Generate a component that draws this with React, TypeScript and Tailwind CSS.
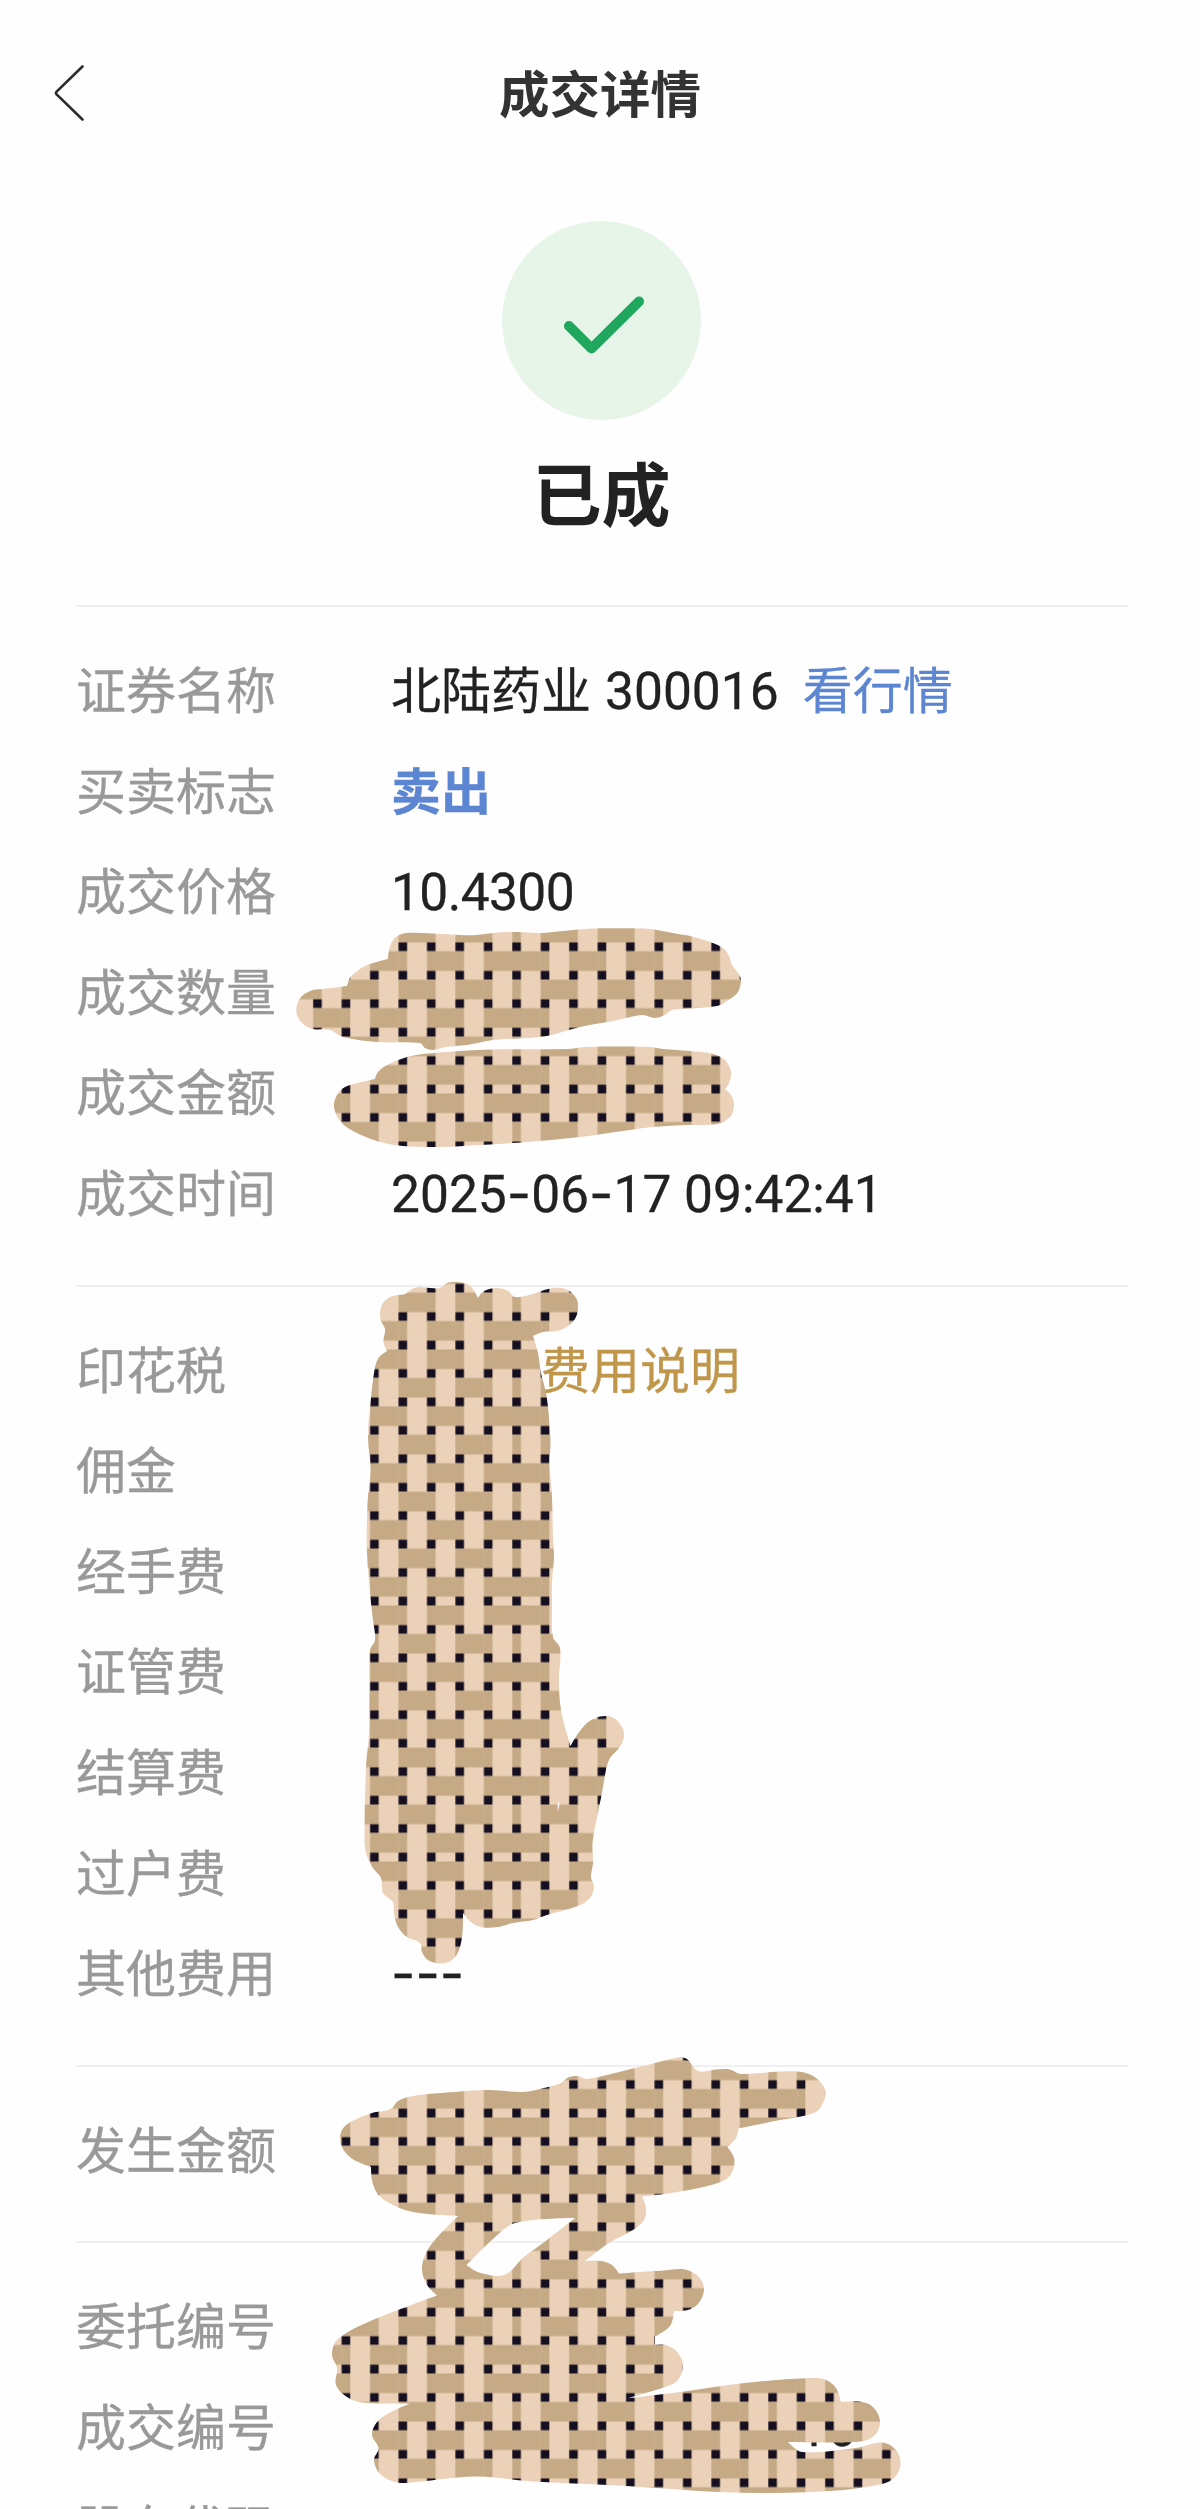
import type { ReactNode } from "react";

type Point = [number, number];

interface DetailRow {
  label: string;
  value?: ReactNode;
}

const Digits = ({ children }: { children: ReactNode }) => (
  <span className="font-['Roboto','Noto_Sans_CJK_SC',sans-serif] text-[51.5px]">
    {children}
  </span>
);

const Dash = ({ children = "-" }: { children?: ReactNode }) => (
  <span className="font-['Inter',sans-serif] text-[53px]">{children}</span>
);

const sections: DetailRow[][] = [
  [
    {
      label: "证券名称",
      value: (
        <>
          <span>北陆药业</span>
          <span className="ml-[14px]">
            <Digits>300016</Digits>
          </span>
          <a className="ml-[24px] text-[#5c86d1]">看行情</a>
        </>
      ),
    },
    {
      label: "买卖标志",
      value: <span className="font-bold text-[#5c86d1]">卖出</span>,
    },
    {
      label: "成交价格",
      value: (
        <span className="tracking-[-0.6px]">
          <Digits>10.4300</Digits>
        </span>
      ),
    },
    { label: "成交数量" },
    { label: "成交金额" },
    {
      label: "成交时间",
      value: (
        <Digits>
          2025
          <Dash />
          06
          <Dash />
          17 09:42:41
        </Digits>
      ),
    },
  ],
  [
    {
      label: "印花税",
      value: <a className="ml-[149px] text-[#c0964b]">费用说明</a>,
    },
    { label: "佣金" },
    { label: "经手费" },
    { label: "证管费" },
    { label: "结算费" },
    { label: "过户费" },
    { label: "其他费用", value: <Dash>---</Dash> },
  ],
  [{ label: "发生金额" }],
  [
    { label: "委托编号" },
    {
      label: "成交编号",
      value: (
        <span className="ml-[407px]">
          <Digits>16</Digits>
        </span>
      ),
    },
    { label: "股东代码" },
  ],
];

// Brush outlines that hide the private values
const quantityMask: Point[] = [
  [388, 959], [389, 950], [393, 940], [399, 935], [407, 933], [433, 933.5], [460, 935], [477, 935],
  [493, 933], [517, 932], [540, 933], [563, 931], [593, 928.5], [643, 928.5], [657, 930], [678, 934],
  [690, 936], [713, 943], [724, 949], [729, 956], [732, 965], [738, 973], [741, 980], [738, 992],
  [730, 999], [717, 1006], [680, 1009], [672, 1010], [665, 1015], [655, 1018], [642, 1015], [613, 1021],
  [580, 1027], [547, 1036], [527, 1038], [493, 1040], [467, 1045], [445, 1047], [433, 1050], [425, 1048],
  [420, 1043], [377, 1042], [343, 1037], [330, 1030], [313, 1029], [303, 1024], [297, 1015], [297, 1005],
  [302, 996], [313, 990], [323, 989], [347, 986], [350, 978], [356, 972], [367, 965],
];

const amountMask: Point[] = [
  [375, 1079], [378, 1072], [387, 1065], [407, 1057], [423, 1054], [460, 1051], [493, 1049.5], [567, 1049],
  [587, 1047], [650, 1047], [663, 1049], [690, 1051], [713, 1054], [725, 1060], [731, 1072], [729, 1083],
  [725, 1089], [731, 1095], [734, 1105], [730, 1117], [717, 1124], [687, 1125], [653, 1127], [630, 1130],
  [580, 1137], [527, 1142], [480, 1145], [440, 1147], [403, 1146], [377, 1141], [353, 1131], [340, 1121],
  [334, 1107], [337, 1095], [345, 1087], [360, 1082.5],
];

const feesMask: Point[] = [
  [380, 1313], [383, 1303], [390, 1297], [398, 1295], [405, 1294], [412, 1289], [420, 1287], [430, 1288],
  [440, 1288], [447, 1283], [457, 1282], [467, 1284], [473, 1289], [478, 1298], [484, 1291], [497, 1288],
  [508, 1291], [515, 1297], [533, 1294], [548, 1289], [562, 1288], [572, 1293], [578, 1303], [576, 1317],
  [568, 1326], [557, 1331], [543, 1332], [533, 1336], [538, 1353], [541, 1373], [546, 1393], [549, 1417],
  [550.5, 1443], [549.5, 1463], [552, 1497], [553, 1537], [554, 1557], [552, 1583], [552, 1607], [553, 1637],
  [560, 1648], [559, 1680], [561, 1710], [570.5, 1746], [577, 1735], [587, 1723], [600, 1716.5], [613, 1717.5],
  [622, 1727], [624, 1737], [619, 1748], [610, 1758], [606, 1770], [602, 1793], [597, 1817], [592.5, 1843],
  [593, 1863], [591, 1877], [594, 1887], [590, 1898], [578, 1906], [547, 1915], [533, 1920], [513, 1923],
  [498, 1927], [483, 1927.5], [472, 1923], [463, 1913], [462.5, 1933], [459, 1950], [452, 1960], [440, 1963.5],
  [428, 1960], [422, 1952], [420, 1943], [407, 1937], [398, 1927], [394, 1913], [393, 1902], [383, 1893],
  [381, 1878], [373, 1868], [366, 1853], [364.5, 1833], [366, 1767], [369, 1733], [369.5, 1667], [370, 1650],
  [375, 1640], [373, 1620], [371, 1603], [367, 1553], [367.5, 1503], [370.5, 1470], [368, 1437], [370.5, 1403],
  [374.5, 1370], [378.5, 1358], [387, 1351], [383.5, 1342], [385, 1329], [381, 1321],
];

const feesGap: Point[] = [[558, 1802], [559.5, 1804], [557.5, 1812]];

const numbersMask: Point[] = [
  [391, 2109], [398, 2101], [413, 2096], [447, 2092.5], [489, 2090], [523, 2092], [544, 2088], [561, 2083],
  [568, 2077.5], [577, 2076], [587, 2079], [623, 2071], [651, 2064], [678, 2057.5], [687, 2059], [698, 2071],
  [716, 2069.5], [730, 2069.5], [741, 2074], [781, 2071.5], [802, 2072], [816, 2078], [825, 2090], [823, 2103],
  [814, 2113], [775, 2121], [738.5, 2128.5], [736, 2138], [727.5, 2147], [734, 2158], [733, 2170], [725, 2180],
  [699, 2188], [664, 2194], [642, 2196.5], [646, 2208], [644, 2220], [633, 2230], [609, 2243], [585, 2261],
  [601, 2261], [612, 2265], [619, 2273.5], [664, 2270.5], [685, 2269.5], [699, 2277], [704, 2290], [698, 2304],
  [688, 2310], [674, 2311], [670, 2326], [655, 2336.5], [655, 2345], [666, 2345], [678, 2353], [683, 2367],
  [678, 2380], [668, 2386], [627, 2398.5], [680, 2392], [745, 2383], [810, 2378], [825, 2379.5], [836, 2388],
  [841, 2402], [860, 2401.5], [873, 2407], [880, 2421], [875, 2435], [861, 2441.5], [788, 2442], [802, 2452],
  [856, 2448], [882, 2442.5], [896, 2450], [900.5, 2465], [894, 2478], [882, 2484], [837, 2490.5], [772, 2493],
  [718, 2492], [626, 2486], [534, 2481.5], [475, 2476.5], [416, 2482], [397, 2482.5], [380, 2474], [374, 2460],
  [378.5, 2448], [372, 2435], [377, 2422], [389, 2413], [410, 2403.5], [362, 2402.5], [347, 2397], [336, 2385],
  [337, 2368], [332, 2355], [337, 2340], [366, 2323], [437, 2295.5], [427, 2285], [422, 2270], [425, 2255],
  [434, 2241], [458, 2216], [413, 2212], [389, 2203], [377, 2193], [372, 2180], [371, 2167], [351, 2158],
  [341, 2145], [341, 2132], [349, 2123], [372, 2113],
];

const numbersGap: Point[] = [
  [515, 2223], [575, 2218], [547, 2240], [524, 2257], [504, 2275], [479, 2272.5], [466.5, 2265], [492, 2240],
];

// Rounds gentle bends, keeps sharp notches sharp
const toPath = (points: Point[]) => {
  const count = points.length;
  const at = (i: number) => points[(i + count) % count];
  const tangent = (i: number): Point => {
    const [ax, ay] = at(i - 1);
    const [bx, by] = at(i);
    const [cx, cy] = at(i + 1);
    const dot = (bx - ax) * (cx - bx) + (by - ay) * (cy - by);
    const len = Math.hypot(bx - ax, by - ay) * Math.hypot(cx - bx, cy - by);
    if (dot / len < 0.6) return [0, 0];
    const span = Math.hypot(cx - ax, cy - ay);
    return [(cx - ax) / span, (cy - ay) / span];
  };

  let d = `M${points[0][0]} ${points[0][1]}`;
  for (let i = 0; i < count; i++) {
    const [x1, y1] = at(i);
    const [x2, y2] = at(i + 1);
    const reach = Math.hypot(x2 - x1, y2 - y1) / 3;
    const [tx1, ty1] = tangent(i);
    const [tx2, ty2] = tangent(i + 1);
    d += `C${x1 + tx1 * reach} ${y1 + ty1 * reach} ${x2 - tx2 * reach} ${y2 - ty2 * reach} ${x2} ${y2}`;
  }
  return d + "Z";
};

const cell = 256 / 9;
const steps = [0, 1, 2, 3, 4, 5, 6, 7, 8];

const WeavePattern = () => (
  <pattern id="weave" x="0.3" y="69.5" width="256" height="256" patternUnits="userSpaceOnUse">
    <rect width="256" height="256" fill="#ebd1b8" />
    {steps.map((row) =>
      steps.map((col) => (
        <g key={`${row}-${col}`}>
          <rect
            x={col * cell}
            y={row * cell}
            width={(row + col) % 2 === 0 ? cell + 0.2 : 8.6}
            height="19.6"
            fill="#c5aa85"
          />
          <rect x={col * cell} y={row * cell + 19.6} width="8.6" height="8.8" fill="#150f1f" />
        </g>
      ))
    )}
  </pattern>
);

const MaskLayer = () => (
  <svg
    className="pointer-events-none absolute left-0 top-0"
    width="1200"
    height="2509"
    viewBox="0 0 1200 2509"
  >
    <defs>
      <WeavePattern />
    </defs>
    <g fill="url(#weave)" fillRule="evenodd">
      <path d={toPath(quantityMask)} />
      <path d={toPath(amountMask)} />
      <path d={toPath(feesMask) + toPath(feesGap)} />
      <path d={toPath(numbersMask) + toPath(numbersGap)} />
    </g>
  </svg>
);

const Header = () => (
  <header className="grid h-[186px] grid-cols-[200px_1fr_200px] items-center">
    <button className="pl-[53px]" aria-label="返回">
      <svg width="32" height="60" viewBox="0 0 32 60" fill="none">
        <path
          d="M29.5 3.5 3.6 28.6Q2.2 30 3.6 31.4L29.5 56.5"
          stroke="#2b2b2b"
          strokeWidth="2.6"
          strokeLinecap="round"
        />
      </svg>
    </button>
    <h1 className="pb-[4px] text-center text-[50.5px] leading-none font-bold text-[#333]">
      成交详情
    </h1>
  </header>
);

const StatusBanner = () => (
  <div className="flex h-[419px] flex-col items-center pt-[35px] pl-[3px]">
    <svg width="199" height="199" viewBox="0 0 199 199" fill="none">
      <circle cx="99.5" cy="99.5" r="99.5" fill="#e7f5e9" />
      <path
        d="M67 105 89.5 127.5 137 80.5"
        stroke="#1fa85d"
        strokeWidth="10"
        strokeLinecap="round"
        strokeLinejoin="round"
      />
    </svg>
    <p className="mt-[37px] text-[69px] leading-[68px] font-bold text-[#222]">
      已成
    </p>
  </div>
);

const App = () => {
  return (
    <div className="relative h-[2509px] w-[1200px] overflow-hidden bg-[#fefefe] font-['Noto_Sans_CJK_SC',sans-serif]">
      <Header />
      <StatusBanner />

      {/* Details */}
      {sections.map((rows, index) => (
        <section
          key={index}
          className="mr-[72px] ml-[77px] border-t-2 border-[#f0f0f0] pt-[30px] pb-[44px]"
        >
          {rows.map((row) => (
            <div
              key={row.label}
              className="-ml-px flex h-[100.6px] items-baseline text-[50px] leading-[100px] whitespace-nowrap [-webkit-text-stroke:0.3px]"
            >
              <span className="w-[315px] text-[#999]">{row.label}</span>
              <div className="leading-none text-[#222]">{row.value}</div>
            </div>
          ))}
        </section>
      ))}

      <MaskLayer />
    </div>
  );
};

export default App;
